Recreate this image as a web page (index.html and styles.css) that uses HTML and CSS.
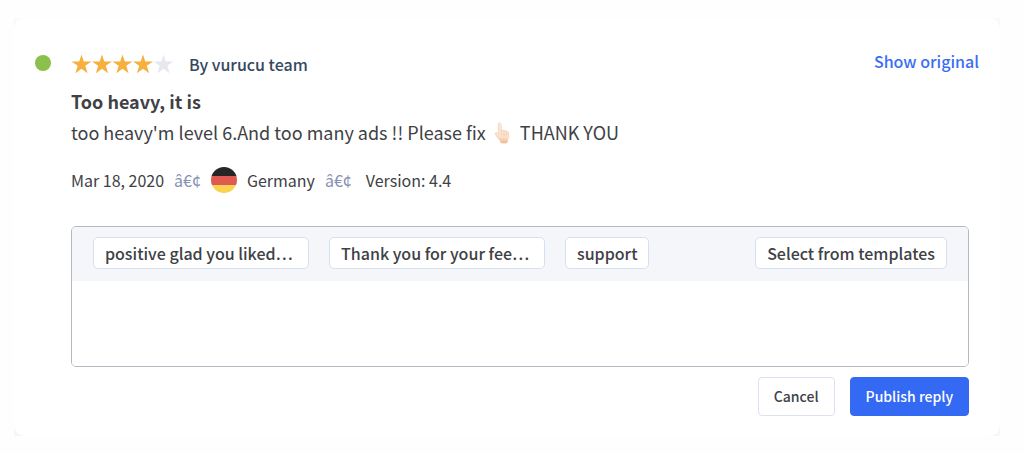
FILE: index.html
```html
<!DOCTYPE html>
<html lang="en">
	<head>
		<meta charset="utf-8">
		<title>Review reply</title>
		<link rel="stylesheet" href="styles.css">
	</head>
	<body>
		<article class="review">
			<span class="status"></span>
			<div class="content">
				<header class="top">
					<svg class="stars" viewBox="0 0 102 20" role="img" aria-label="4 out of 5 stars">
						<defs>
							<path id="star" d="M10 0.5 L12.3 7.4 H20 L13.8 11.8 L16.1 19.3 L10 14.8 L3.9 19.3 L6.2 11.8 L0 7.4 H7.7 Z"/>
						</defs>
						<use href="#star" class="on"/>
						<use href="#star" class="on" x="20.5"/>
						<use href="#star" class="on" x="41"/>
						<use href="#star" class="on" x="61.5"/>
						<use href="#star" class="off" x="82"/>
					</svg>
					<span class="author">By vurucu team</span>
					<a class="original" href="#">Show original</a>
				</header>
				<h2 class="title">Too heavy, it is</h2>
				<p class="text">too heavy'm level 6.And too many ads !! Please fix
					<svg class="hand" viewBox="0 0 16 22" aria-hidden="true">
						<defs>
							<linearGradient id="skin" x1="0" y1="0" x2="0" y2="1">
								<stop offset="0" stop-color="#fdecdf"/>
								<stop offset="0.7" stop-color="#fce0cb"/>
								<stop offset="1" stop-color="#ebb790"/>
							</linearGradient>
						</defs>
						<path fill="url(#skin)" stroke="#f0c7a6" stroke-width="0.6" d="M4.1 2.2 C4.1 0.6 7 0.6 7 2.2 L7.4 8.6 C8 7.6 9.8 7.8 10 9 C10.8 8.2 12.4 8.6 12.5 9.8 C13.4 9.3 14.7 9.8 14.7 11.2 V14.6 C14.7 16.8 13.4 17.4 13.4 18.6 V20.6 C11.6 21.5 8 21.4 6.4 20.6 V18.8 C5 17.4 3 15.2 1.4 12.4 C0.7 11 1.7 10 3 10.7 L4.7 12.2 Z"/>
						<path fill="none" stroke="#e9b998" stroke-width="0.4" d="M7.4 8.6 V12.2 M10 9.2 V12.4 M12.5 10 V12.6 M7.4 12.2 C8 13.2 9.6 13.2 10 12.4 C10.8 13.4 12 13.2 12.5 12.6"/>
					</svg>
					<span>THANK YOU</span>
				</p>
				<div class="meta">
					<span>Mar 18, 2020</span>
					<span class="sep">â€¢</span>
					<svg class="flag" viewBox="0 0 26 26" role="img" aria-label="Flag of Germany">
						<clipPath id="round"><circle cx="13" cy="13" r="13"/></clipPath>
						<g clip-path="url(#round)">
							<path fill="#262626" d="M0 0h26v9H0z"/>
							<path fill="#df5a50" d="M0 9h26v9H0z"/>
							<path fill="#fbd351" d="M0 18h26v8H0z"/>
						</g>
					</svg>
					<span>Germany</span>
					<span class="sep">â€¢</span>
					<span class="version">Version: 4.4</span>
				</div>
				<form class="reply">
					<div class="editor">
						<div class="templates">
							<button type="button" class="chip long">positive glad you liked…</button>
							<button type="button" class="chip long">Thank you for your fee…</button>
							<button type="button" class="chip">support</button>
							<button type="button" class="chip select">Select from templates</button>
						</div>
						<textarea class="message" aria-label="Reply"></textarea>
					</div>
					<div class="actions">
						<button type="button" class="btn">Cancel</button>
						<button type="submit" class="btn primary">Publish reply</button>
					</div>
				</form>
			</div>
		</article>
	</body>
</html>
```
FILE: styles.css
```css
* {
	box-sizing: border-box;
}

body {
	margin: 18px 24px 16px 14px;
	background-color: #fefefe;
	color: #3e4145;
	font-family: "Noto Sans CJK KR", "Noto Sans", sans-serif;
	font-size: 18px;
}

button, textarea {
	font-family: inherit;
	color: inherit;
}

.review {
	display: flex;
	gap: 20px;
	padding: 32px 21px 20px;
	background-color: white;
	border-radius: 10px;
	box-shadow: 0 2px 16px rgba(0, 0, 0, 0.09);
}

.status {
	flex: none;
	width: 16px;
	height: 16px;
	margin-top: 5px;
	border-radius: 50%;
	background-color: #8bc04a;
}

.content {
	flex: 1;
	min-width: 0;
}

.top {
	display: flex;
	align-items: center;
	height: 28px;
}

.stars {
	width: 103px;
	height: 20px;
	margin-right: 15px;
}

.on {
	fill: #f5b03e;
}

.off {
	fill: #e6e8ed;
}

.author {
	font-size: 16px;
	font-weight: 500;
	color: #34495e;
}

.original {
	margin-left: auto;
	padding-bottom: 6px;
	font-size: 16px;
	font-weight: 500;
	color: #3a6df5;
	text-decoration: none;
}

.title {
	margin: 9px 0 0;
	font-size: 18px;
	font-weight: 700;
	line-height: 28px;
}

.text {
	margin: 1px 0 0;
	line-height: 32px;
}

.hand {
	width: 16px;
	height: 22px;
	margin: 0 6px 0 4px;
	vertical-align: -4px;
}

.meta {
	display: flex;
	align-items: center;
	gap: 10px;
	height: 28px;
	margin-top: 18px;
	font-size: 16px;
}

.sep {
	color: #8490b4;
}

.flag {
	width: 26px;
	height: 26px;
}

.version {
	margin-left: 4px;
}

.reply {
	margin: 32px 10px 0 0;
}

.editor {
	border: 1px solid #b3b8c2;
	border-radius: 5px;
	overflow: hidden;
}

.templates {
	display: flex;
	gap: 20px;
	padding: 10px 21px 12px;
	background-color: #f4f6fa;
}

.chip {
	height: 32px;
	padding: 0 11px;
	border: 1px solid #d5dff0;
	border-radius: 5px;
	background-color: white;
	font-size: 16px;
	font-weight: 500;
	line-height: 30px;
	text-align: left;
	white-space: nowrap;
}

.long {
	width: 216px;
}

.select {
	margin-left: auto;
}

.message {
	display: block;
	width: 100%;
	height: 85px;
	padding: 10px 20px;
	border: 0;
	background-color: white;
	font-size: 16px;
	resize: none;
	outline: none;
}

.actions {
	display: flex;
	justify-content: flex-end;
	gap: 15px;
	margin-top: 10px;
}

.btn {
	height: 39px;
	padding: 0 15px 2px;
	border: 1px solid #dbe1f0;
	border-radius: 4px;
	background-color: white;
	font-size: 14px;
	font-weight: 500;
}

.primary {
	border-color: #346af3;
	background-color: #346af3;
	color: white;
}
```
